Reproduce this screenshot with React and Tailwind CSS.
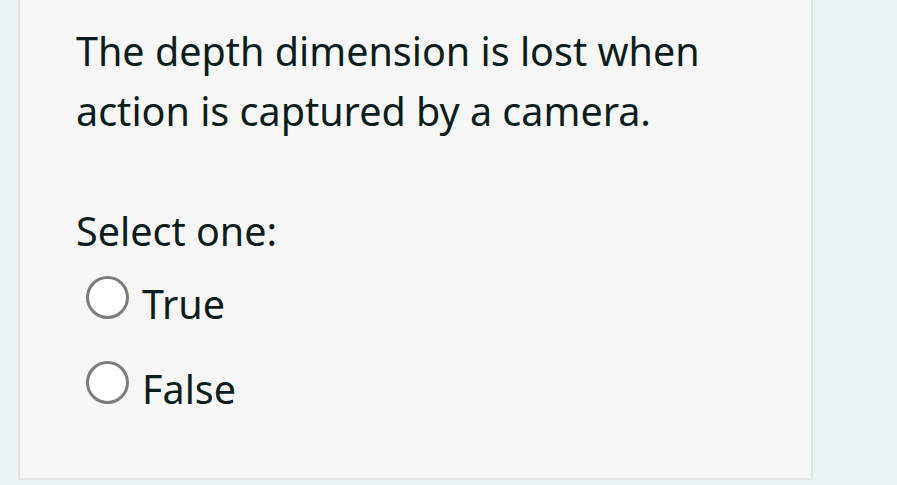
import React from "react";

function Radio({ label }) {
  return (
    <label className="flex items-start gap-[13px]">
      <span className="mt-[2px] w-[43px] h-[43px] rounded-full border-[3px] border-[#7c7c7c] bg-white shrink-0"></span>
      <span className="leading-[60px]">{label}</span>
    </label>
  );
}

export default function App() {
  return (
    <div
      className="w-[897px] h-[485px] overflow-hidden bg-[#ebf3f7] text-[#0c1d20]"
      style={{ fontFamily: "'Noto Sans', sans-serif" }}
    >
      <div className="ml-[18px] w-[795px] h-[480px] bg-[#f7f7f7] border-2 border-t-0 border-[#e3e3e3] pl-[56px] pt-[21px] text-[39.5px]">
        {/* Question */}
        <p className="leading-[60px]">
          The depth dimension is lost when
          <br />
          action is captured by a camera.
        </p>

        <p className="mt-[60px] leading-[60px]">Select one:</p>

        {/* Answers */}
        <div className="mt-[13px] ml-[10px] flex flex-col gap-[25px]">
          <Radio label="True" />
          <Radio label="False" />
        </div>
      </div>
    </div>
  );
}
